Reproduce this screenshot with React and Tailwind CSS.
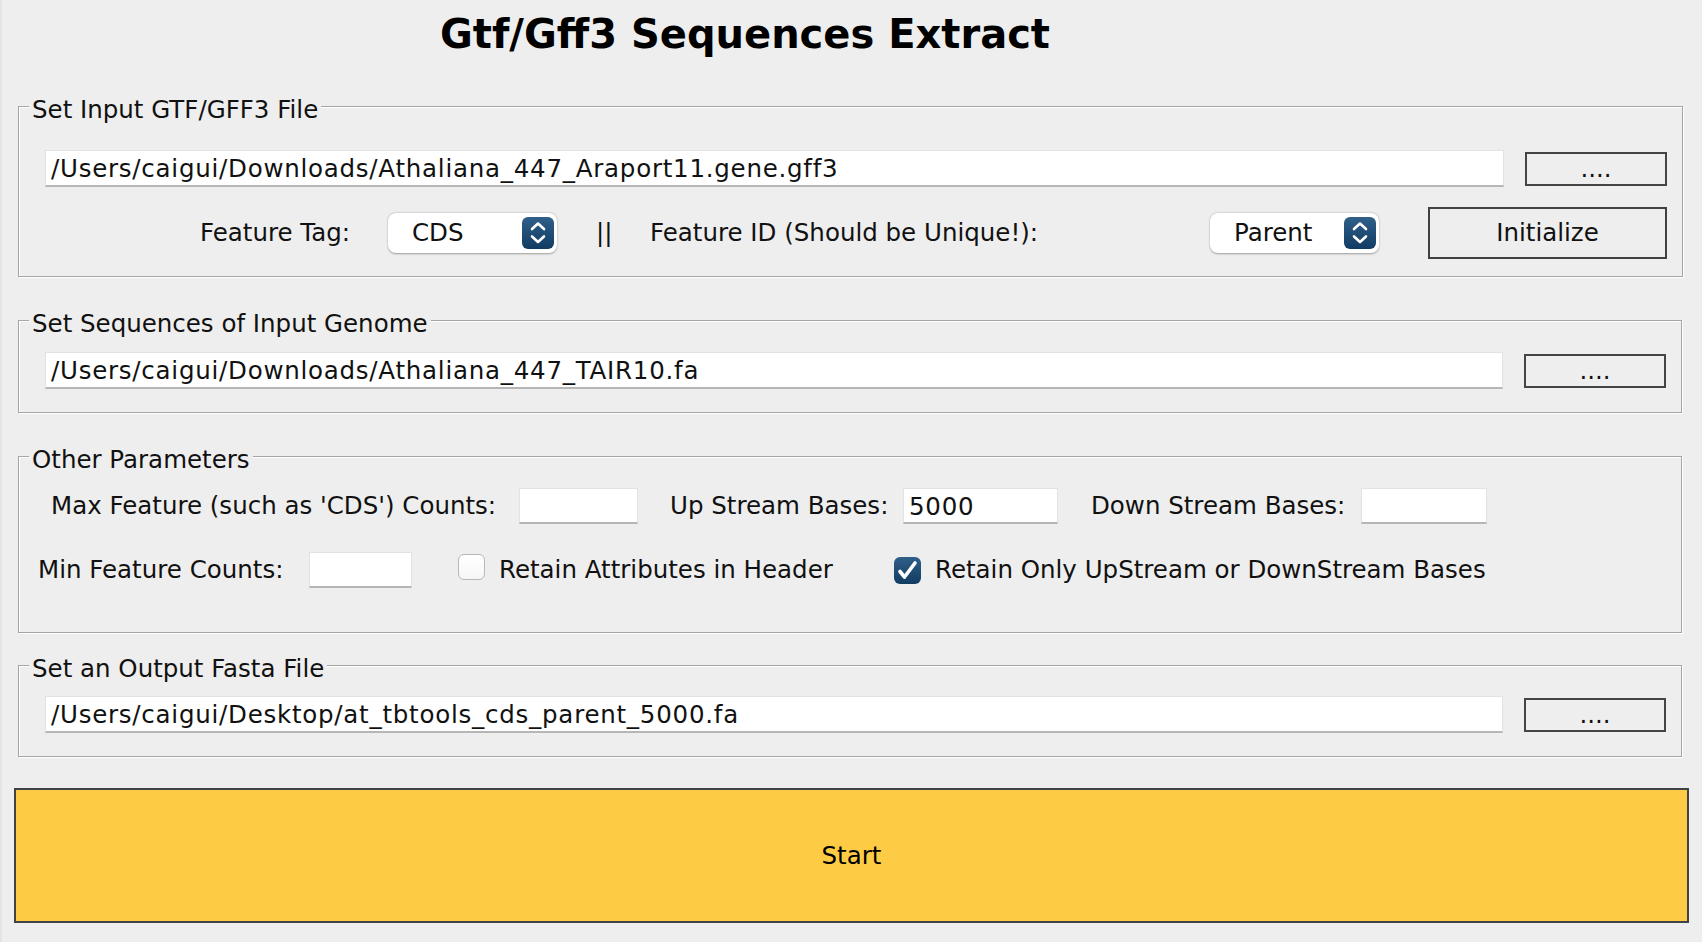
import { useState } from 'react';

const Combo = ({ value }) => (
  <div className="flex h-[40px] w-[169px] items-center justify-between rounded-[8px] bg-white pl-[24px] pr-[3px] shadow-[0_0.5px_2px_rgba(0,0,0,0.35)]">
    <span>{value}</span>
    <div className="flex h-[32px] w-[32px] items-center justify-center rounded-[6px] bg-gradient-to-b from-[#2f5f8a] to-[#123c62]">
      <svg width="32" height="32" viewBox="0 0 32 32" fill="none" stroke="#fff" strokeWidth="2.6" strokeLinecap="round" strokeLinejoin="round">
        <path d="M10 12 L16 6.5 L22 12" />
        <path d="M10 19.5 L16 25 L22 19.5" />
      </svg>
    </div>
  </div>
);

const Field = ({ value = '', className = '' }) => (
  <div className={`flex h-[37px] items-center border border-[#e2e2e2] border-b-[#b6b6b6] border-b-2 bg-white pl-[5px] pt-[2px] tracking-[0.75px] whitespace-nowrap overflow-hidden ${className}`}>
    {value}
  </div>
);

const DotsButton = () => (
  <button className="ml-[21px] flex h-[34px] w-[142px] items-center justify-center border-2 border-[#444] leading-[30px]">
    ....
  </button>
);

const Box = ({ checked, onClick }) =>
  checked ? (
    <button onClick={onClick} className="h-[27px] w-[27px] rounded-[6px] bg-gradient-to-b from-[#2f5f8a] to-[#123c62]">
      <svg width="27" height="27" viewBox="0 0 27 27" fill="none" stroke="#fff" strokeWidth="3.6" strokeLinecap="round" strokeLinejoin="round">
        <path d="M6 14.5 L10.5 20 L21 6" />
      </svg>
    </button>
  ) : (
    <button onClick={onClick} className="h-[26px] w-[27px] rounded-[6px] border border-[#b8b8b8] bg-gradient-to-b from-white to-[#f6f6f6]" />
  );

const Group = ({ title, children, className = '' }) => (
  <fieldset className={`w-[1664px] border border-[#a5a5a5] px-0 shadow-[inset_1px_1px_0_#fff,1px_1px_0_#fff] ${className}`}>
    <legend className="ml-[10px] bg-[#eeeeee] px-[3px] pt-[8px] leading-[30px]">{title}</legend>
    {children}
  </fieldset>
);

export default function App() {
  const [attrs, setAttrs] = useState(false);
  const [only, setOnly] = useState(true);

  return (
    <div className="h-[942px] w-[1702px] overflow-hidden border-l-2 border-[#e4e4e4] bg-[#eeeeee] font-['DejaVu_Sans',sans-serif] text-[24.5px] leading-[30px] text-[#111]">
      <h1 className="mt-[10px] h-[48px] pl-[438px] text-[40px] font-bold leading-[48px] text-black">
        Gtf/Gff3 Sequences Extract
      </h1>

      <div className="flex flex-col pl-[16px]">
        <Group title="Set Input GTF/GFF3 File" className="mt-[29px]">
          <div className="pl-[26px] pr-[15px] pt-[25px] pb-[17px]">
            <div className="flex items-center">
              <Field className="flex-1" value="/Users/caigui/Downloads/Athaliana_447_Araport11.gene.gff3" />
              <DotsButton />
            </div>
            <div className="mt-[20px] flex h-[52px] items-center">
              <span className="ml-[155px] w-[188px]">Feature Tag:</span>
              <Combo value="CDS" />
              <span className="ml-[39px] w-[54px]">||</span>
              <span className="w-[560px]">Feature ID (Should be Unique!):</span>
              <Combo value="Parent" />
              <button className="ml-[49px] flex h-[52px] w-[239px] items-center justify-center border-2 border-[#404040]">
                Initialize
              </button>
            </div>
          </div>
        </Group>

        <Group title="Set Sequences of Input Genome" className="mt-[24px]">
          <div className="flex items-center pl-[26px] pr-[15px] pt-[13px] pb-[23px]">
            <Field className="flex-1" value="/Users/caigui/Downloads/Athaliana_447_TAIR10.fa" />
            <DotsButton />
          </div>
        </Group>

        <Group title="Other Parameters" className="mt-[24px]">
          <div className="pt-[13px] pb-[44px]">
            <div className="flex h-[36px] items-center pl-[32px]">
              <span className="w-[468px] whitespace-nowrap">Max Feature (such as 'CDS') Counts:</span>
              <Field className="!h-[36px] w-[119px]" />
              <span className="ml-[32px] w-[233px] whitespace-nowrap">Up Stream Bases:</span>
              <Field className="!h-[36px] w-[155px]" value="5000" />
              <span className="ml-[33px] w-[270px] whitespace-nowrap">Down Stream Bases:</span>
              <Field className="!h-[36px] w-[126px]" />
            </div>
            <div className="mt-[28px] flex h-[36px] items-center pl-[19px]">
              <span className="w-[271px] whitespace-nowrap">Min Feature Counts:</span>
              <Field className="!h-[36px] w-[103px]" />
              <div className="ml-[46px]">
                <Box checked={attrs} onClick={() => setAttrs(!attrs)} />
              </div>
              <span className="ml-[14px] w-[395px] whitespace-nowrap">Retain Attributes in Header</span>
              <Box checked={only} onClick={() => setOnly(!only)} />
              <span className="ml-[14px] whitespace-nowrap">Retain Only UpStream or DownStream Bases</span>
            </div>
          </div>
        </Group>

        <Group title="Set an Output Fasta File" className="mt-[13px]">
          <div className="flex items-center pl-[26px] pr-[15px] pt-[12px] pb-[23px]">
            <Field className="flex-1" value="/Users/caigui/Desktop/at_tbtools_cds_parent_5000.fa" />
            <DotsButton />
          </div>
        </Group>
      </div>

      <button className="ml-[12px] mt-[31px] flex h-[135px] w-[1675px] items-center justify-center border-2 border-[#3f4247] bg-[#fecc44] text-black">
        Start
      </button>
    </div>
  );
}
